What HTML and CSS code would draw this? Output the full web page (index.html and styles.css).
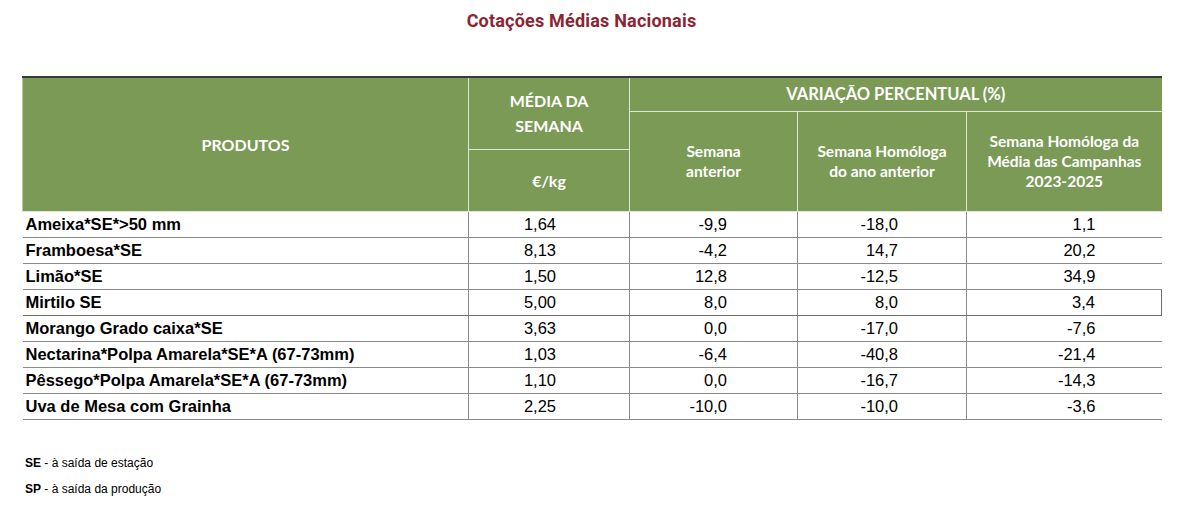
FILE: index.html
```html
<!DOCTYPE html>
<html lang="pt">
<head>
<meta charset="utf-8">
<title>Cotações Médias Nacionais</title>
<link rel="stylesheet" href="styles.css">
</head>
<body>
<div class="page">
  <h1 class="title">Cotações Médias Nacionais</h1>
  <table class="quotes">
    <colgroup>
      <col class="c-prod">
      <col class="c-media">
      <col class="c-v1">
      <col class="c-v2">
      <col class="c-v3">
    </colgroup>
    <thead>
      <tr class="h1">
        <th rowspan="3" class="th-prod">PRODUTOS</th>
        <th rowspan="2" class="th-media">MÉDIA DA<br>SEMANA</th>
        <th colspan="3" class="th-var">VARIAÇÃO PERCENTUAL (%)</th>
      </tr>
      <tr class="h2">
        <th rowspan="2" class="th-sub">Semana<br>anterior</th>
        <th rowspan="2" class="th-sub">Semana Homóloga<br>do ano anterior</th>
        <th rowspan="2" class="th-sub">Semana Homóloga da<br>Média das Campanhas<br>2023-2025</th>
      </tr>
      <tr class="h3">
        <th class="th-unit">€/kg</th>
      </tr>
    </thead>
    <tbody>
      <tr><td class="prod">Ameixa*SE*&gt;50 mm</td><td class="n n1">1,64</td><td class="n n2">-9,9</td><td class="n n3">-18,0</td><td class="n n4">1,1</td></tr>
      <tr><td class="prod">Framboesa*SE</td><td class="n n1">8,13</td><td class="n n2">-4,2</td><td class="n n3">14,7</td><td class="n n4">20,2</td></tr>
      <tr><td class="prod">Limão*SE</td><td class="n n1">1,50</td><td class="n n2">12,8</td><td class="n n3">-12,5</td><td class="n n4">34,9</td></tr>
      <tr class="boxed"><td class="prod">Mirtilo SE</td><td class="n n1">5,00</td><td class="n n2">8,0</td><td class="n n3">8,0</td><td class="n n4 box-end">3,4</td></tr>
      <tr><td class="prod">Morango Grado caixa*SE</td><td class="n n1">3,63</td><td class="n n2">0,0</td><td class="n n3">-17,0</td><td class="n n4">-7,6</td></tr>
      <tr><td class="prod">Nectarina*Polpa Amarela*SE*A (67-73mm)</td><td class="n n1">1,03</td><td class="n n2">-6,4</td><td class="n n3">-40,8</td><td class="n n4">-21,4</td></tr>
      <tr><td class="prod">Pêssego*Polpa Amarela*SE*A (67-73mm)</td><td class="n n1">1,10</td><td class="n n2">0,0</td><td class="n n3">-16,7</td><td class="n n4">-14,3</td></tr>
      <tr><td class="prod">Uva de Mesa com Grainha</td><td class="n n1">2,25</td><td class="n n2">-10,0</td><td class="n n3">-10,0</td><td class="n n4">-3,6</td></tr>
    </tbody>
  </table>
  <div class="notes">
    <p><b>SE</b> - à saída de estação</p>
    <p><b>SP</b> - à saída da produção</p>
  </div>
</div>
</body>
</html>
```
FILE: styles.css
```css
html, body {
  margin: 0;
  padding: 0;
  background: #ffffff;
}

.page {
  padding: 10px 0 0 22px;
  width: 1139px;
  font-family: "Liberation Sans", Arial, sans-serif;
  color: #000;
}

.title {
  margin: 0;
  padding-right: 20px;
  height: 66px;
  text-align: center;
  font-family: Roboto, "Liberation Sans", sans-serif;
  font-weight: 700;
  font-size: 18px;
  line-height: 22px;
  color: #8c2433;
  letter-spacing: 0.2px;
}

.quotes {
  width: 1139px;
  border-collapse: collapse;
  table-layout: fixed;
  border-top: 2px solid #3a3a3a;
}

.c-prod { width: 446px; }
.c-media { width: 161px; }
.c-v1 { width: 168px; }
.c-v2 { width: 169px; }
.c-v3 { width: 195px; }

.quotes th {
  background: #7a9a56;
  color: #ffffff;
  font-family: Lato, "Open Sans", sans-serif;
  font-weight: 700;
  padding: 0;
  border: 1px solid #dfe7d6;
  text-align: center;
  vertical-align: middle;
}

.quotes thead tr:first-child th { border-top: none; }
.quotes .th-prod { border-left: 1px solid #b9c9a6; }
.quotes .th-var, .quotes th:last-child { border-right: none; }

.h1 { height: 34px; }
.h2 { height: 38px; }
.h3 { height: 62px; }

.th-prod { font-size: 16px; }
.th-media { font-size: 16px; line-height: 25px; padding-top: 4px; }
.th-var { font-size: 16.5px; }
.th-unit { font-size: 16px; }
.th-sub { font-size: 15.5px; line-height: 20px; }

.quotes td {
  height: 25px;
  padding: 0;
  font-size: 16.5px;
  border-bottom: 1px solid #8a8a8a;
  border-left: 1px solid #8a8a8a;
  vertical-align: middle;
}

.quotes tbody tr { height: 26px; }

.quotes td.prod {
  border-left: none;
  font-weight: 700;
  padding-left: 3px;
}

.quotes td.n { text-align: right; }
.quotes td.n1 { padding-right: 73px; }
.quotes td.n2 { padding-right: 70px; }
.quotes td.n3 { padding-right: 68px; }
.quotes td.n4 { padding-right: 66px; }

.quotes tr.boxed td { border-top: 1px solid #6e6e6e; border-bottom: 1px solid #6e6e6e; }
.quotes td.box-end { border-right: 1px solid #6e6e6e; }

.notes {
  margin-top: 36px;
  padding-left: 3px;
  font-size: 12px;
}

.notes p {
  margin: 0 0 12px 0;
  line-height: 14px;
}
```
